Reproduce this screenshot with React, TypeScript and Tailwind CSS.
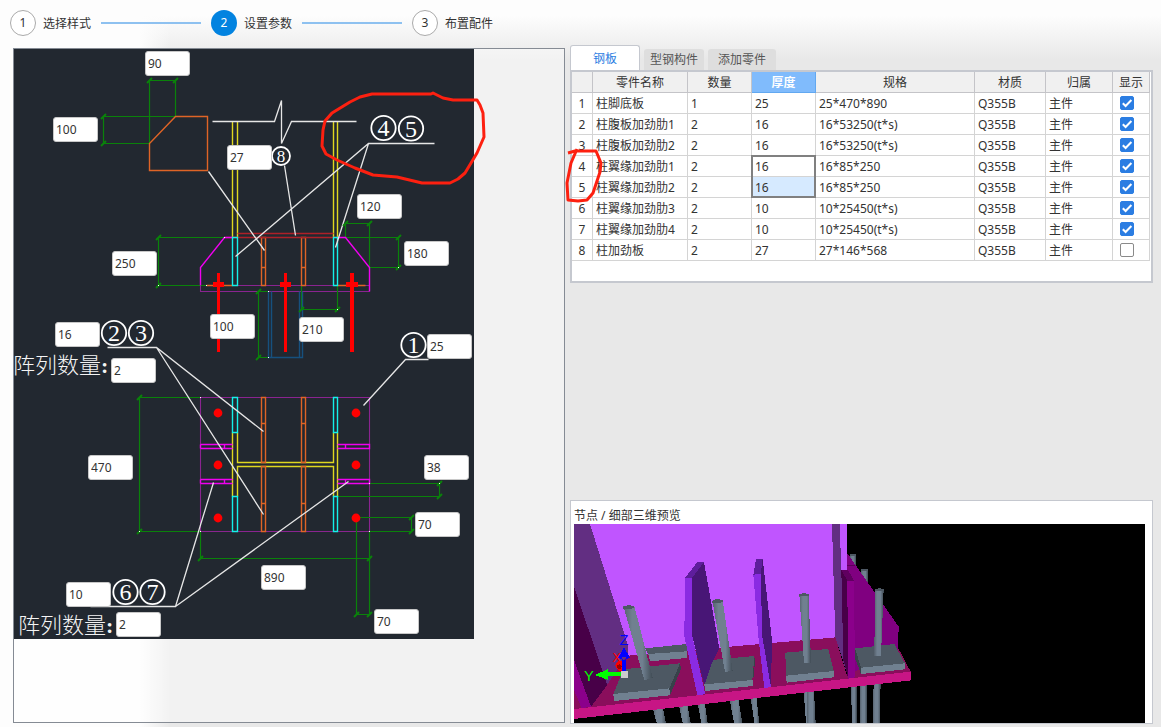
import { Fragment, useState } from "react";

const steps = ["选择样式", "设置参数", "布置配件"];
const tabs = ["钢板", "型钢构件", "添加零件"];

type Part = {
  name: string;
  count: string;
  thickness: string;
  spec: string;
  shown: boolean;
};

const initialParts: Part[] = [
  { name: "柱脚底板", count: "1", thickness: "25", spec: "25*470*890", shown: true },
  { name: "柱腹板加劲肋1", count: "2", thickness: "16", spec: "16*53250(t*s)", shown: true },
  { name: "柱腹板加劲肋2", count: "2", thickness: "16", spec: "16*53250(t*s)", shown: true },
  { name: "柱翼缘加劲肋1", count: "2", thickness: "16", spec: "16*85*250", shown: true },
  { name: "柱翼缘加劲肋2", count: "2", thickness: "16", spec: "16*85*250", shown: true },
  { name: "柱翼缘加劲肋3", count: "2", thickness: "10", spec: "10*25450(t*s)", shown: true },
  { name: "柱翼缘加劲肋4", count: "2", thickness: "10", spec: "10*25450(t*s)", shown: true },
  { name: "柱加劲板", count: "2", thickness: "27", spec: "27*146*568", shown: false },
];

const dimensions = [
  { label: "切角宽度", value: "90", place: "left-[131px] top-[2px]" },
  { label: "切角高度", value: "100", place: "left-[39px] top-[68px]" },
  { label: "加劲板厚度", value: "27", place: "left-[213px] top-[96px]" },
  { label: "顶部宽度", value: "120", place: "left-[343px] top-[145px]" },
  { label: "侧边高度", value: "180", place: "left-[390px] top-[192px]" },
  { label: "加劲肋高度", value: "250", place: "left-[98px] top-[202px]" },
  { label: "抗剪键高度", value: "100", place: "left-[196px] top-[265px]" },
  { label: "加劲肋间距", value: "210", place: "left-[285px] top-[268px]" },
  { label: "底板厚度", value: "25", place: "left-[413px] top-[285px]" },
  { label: "腹板加劲肋厚度", value: "16", place: "left-[41px] top-[273px]" },
  { label: "腹板阵列数量", value: "2", place: "left-[97px] top-[309px]" },
  { label: "底板长度", value: "470", place: "left-[74px] top-[406px]" },
  { label: "加劲肋偏移", value: "38", place: "left-[410px] top-[406px]" },
  { label: "竖向边距", value: "70", place: "left-[401px] top-[463px]" },
  { label: "底板宽度", value: "890", place: "left-[247px] top-[516px]" },
  { label: "翼缘加劲肋厚度", value: "10", place: "left-[52px] top-[533px]" },
  { label: "翼缘阵列数量", value: "2", place: "left-[102px] top-[563px]" },
  { label: "横向边距", value: "70", place: "left-[360px] top-[560px]" },
];

const balloons = [
  { n: "8", x: 281, y: 156, r: 9, size: 17 },
  { n: "4", x: 383.5, y: 128, r: 12.2, size: 24 },
  { n: "5", x: 411, y: 128.5, r: 12.2, size: 24 },
  { n: "2", x: 114, y: 333, r: 12.2, size: 24 },
  { n: "3", x: 141, y: 333, r: 12.2, size: 24 },
  { n: "1", x: 413.5, y: 345, r: 12.2, size: 24 },
  { n: "6", x: 125.5, y: 592, r: 12.2, size: 24 },
  { n: "7", x: 152.5, y: 592, r: 12.2, size: 24 },
];

const dimensionTicks = [
  [149, 80], [175, 80], [103, 116], [103, 143], [158, 237], [158, 285],
  [258, 291], [258, 357], [301, 309], [337, 309], [345, 223], [369, 223],
  [398, 237], [398, 267], [139, 397], [139, 531], [200, 558], [369, 558],
  [439, 483], [439, 496], [411, 517], [411, 531], [356, 614], [369, 614],
];

const bolts = [
  [218, 413], [218, 465], [218, 518], [356, 413], [356, 465], [356, 518],
];

function Stepper() {
  return (
    <ol className="flex h-[45px] items-center pl-[10px]">
      {steps.map((step, i) => (
        <Fragment key={step}>
          {i > 0 && <li aria-hidden="true" className="mx-[10px] h-[2px] w-[100px] bg-[#8ec1f0]" />}
          <li className="flex items-center gap-[7px]">
            <span
              className={
                i === 1
                  ? "flex size-[26px] items-center justify-center rounded-full bg-[#0283e0] text-white"
                  : "flex size-[26px] items-center justify-center rounded-full border border-[#aaaaaa] bg-white"
              }
            >
              {i + 1}
            </span>
            <span className="pt-[2px]">{step}</span>
          </li>
        </Fragment>
      ))}
    </ol>
  );
}

function SectionDrawing() {
  return (
    <svg viewBox="14 49 460 590" className="absolute inset-0 size-full overflow-visible">
      <g fill="none" strokeWidth="1.4" transform="translate(.5 .5)">
        <path
          stroke="#8a2490"
          strokeWidth="1.1"
          d="M200 285H369M200 285V291H369M200 397H369V531H200Z"
        />
        <path
          stroke="#0a820a"
          strokeWidth="1.2"
          d="M149 143V80H175V116M175 116H103V143H149M224 237H158V285H206M268 291H258V357H268M301 285V309H337V285M345 237V223H369V267M345 237H398V267H369M200 397H139V531H200M200 531V558H369M369 483H439V496H337M356 517H411V531H369M356 518V614H369V531"
        />
        <path stroke="#16507e" d="M268 291V357H302V291M271 291V357M299 291V357" />
        <path stroke="#e0d820" d="M232 121V237M237 121V237M333 121V237M337 121V237" />
        <path stroke="#e0d820" d="M232 432V496M337 432V496M237 432V462H333V432M237 496V466H333V496" />
        <path stroke="#df6426" d="M175 116H207V170H149V143ZM206 285H232M337 285H365" />
        <path
          stroke="#df6426"
          d="M261 237H265V285H261ZM301 237H305V285H301ZM261 267H265M301 267H305M261 397H265V462H261ZM301 397H305V462H301ZM261 466H265V531H261ZM301 466H305V531H301ZM261 423H265M301 423H305M261 503H265M301 503H305"
        />
        <path stroke="#ae2028" d="M237 233H333M225 237H340" />
        <path
          stroke="#f000f0"
          d="M232 237H224L200 267V285M338 237H345L369 267V291M200 444H232M200 448H232M200 444V448M224 444V448M200 479H232M200 483H232M200 479V483M224 479V483M337 444H369V448H337M345 444V448M337 479H369V483H337M345 479V483"
        />
        <path
          stroke="#14f0e8"
          d="M232 237H237V285H232ZM333 237H337V285H333ZM232 397H237V432H232ZM333 397H337V432H333ZM232 496H237V531H232ZM333 496H337V531H333Z"
        />
        <path
          stroke="#e6e6e6"
          strokeWidth="1.3"
          d="M212 121H274L281 100V143L291 121H356M208 171L264 250M284 165L295 235M434 143H368L235 256M368 143L335 247M428 359H405L363 405M107 347H156L263 431M156 347L263 514M90 606H175L213 482M175 606L348 481"
        />
      </g>
      {dimensionTicks.map(([x, y]) => (
        <path key={`${x}-${y}`} d={`M${x - 2} ${y + 3}L${x + 3} ${y - 2}`} stroke="#0a820a" strokeWidth="2" />
      ))}
      <path
        fill="#ffffff"
        d="M224 237h1v1h-1zM158 285h1v1h-1zM206 285h1v1h-1zM268 291h1v1h-1zM268 357h1v1h-1zM337 309h1v1h-1zM398 267h1v1h-1zM200 397h1v1h-1zM139 531h1v1h-1zM200 531h1v1h-1zM369 483h1v1h-1zM439 483h1v1h-1zM369 531h1v1h-1z"
      />
      <path
        fill="#ff0000"
        d="M217 273h3v79h-3zM213 282h11v5h-11zM284 273h3v79h-3zM280 282h11v5h-11zM350 273h4v79h-4zM346 282h12v5h-12z"
      />
      {bolts.map(([x, y]) => (
        <circle key={`${x}-${y}`} cx={x} cy={y} r="4.4" fill="#ff0000" />
      ))}
      {balloons.map((b) => (
        <g key={b.n}>
          <circle cx={b.x} cy={b.y} r={b.r} fill="none" stroke="#ffffff" strokeWidth="1.8" />
          <text
            x={b.x}
            y={b.y + b.size / 3}
            fontSize={b.size}
            textAnchor="middle"
            fill="#ffffff"
            className="font-['Liberation_Serif',serif]"
          >
            {b.n}
          </text>
        </g>
      ))}
      <g fill="#f4f4f4" fontSize="22" className="font-['Liberation_Serif','Noto_Sans_CJK_SC',serif] font-light">
        <text x="13" y="373">
          阵列数量<tspan className="font-bold">:</tspan>
        </text>
        <text x="18" y="633">
          阵列数量<tspan className="font-bold">:</tspan>
        </text>
      </g>
    </svg>
  );
}

function Annotation() {
  return (
    <svg viewBox="14 49 460 590" className="pointer-events-none absolute inset-0 size-full overflow-visible">
      <path
        d="M322 146L326 154L337 160L355 168L373 175L397 177L422 183H450L458 179L465 173L477 153L484 137L483 113L480 105L477 100H453L443 98L433 93L431 94H372L360 97L350 102L332 113L325 121L323 130Z"
        fill="none"
        stroke="#fd2010"
        strokeWidth="3"
        strokeLinejoin="round"
      />
    </svg>
  );
}

function DrawingPanel() {
  return (
    <section className="mt-[3px] mb-px min-w-0 flex-[550] border border-[#858b94] bg-white/45">
      <div className="relative h-[590px] w-[460px] bg-[#222830]">
        <SectionDrawing />
        {dimensions.map((d) => (
          <input
            key={d.label}
            aria-label={d.label}
            defaultValue={d.value}
            className={`absolute h-[25px] w-[45px] rounded-[3px] border border-[#c8c8c8] bg-white pl-[2px] text-[#333333] outline-none ${d.place}`}
          />
        ))}
        <Annotation />
      </div>
    </section>
  );
}

function PartsTable() {
  const [parts, setParts] = useState(initialParts);
  const toggle = (index: number) =>
    setParts(parts.map((p, i) => (i === index ? { ...p, shown: !p.shown } : p)));
  const head = "border-r border-b border-[#c4c4c8] pt-[2px] font-normal";
  const cell = "border-r border-b border-[#d4d4d4] pt-[2px] pl-[3px]";
  return (
    <table className="w-full table-fixed border-separate border-spacing-0">
      <colgroup>
        <col className="w-[21px]" />
        <col className="w-[95px]" />
        <col className="w-[64px]" />
        <col className="w-[64px]" />
        <col />
        <col className="w-[71px]" />
        <col className="w-[67px]" />
        <col className="w-[37px]" />
      </colgroup>
      <thead>
        <tr className="h-[21px] bg-[#f0f0f0]">
          <th className={head} />
          <th className={head}>零件名称</th>
          <th className={head}>数量</th>
          <th className="border-r border-b border-[#62a8f0] bg-[#80bbfc] pt-[2px] font-bold text-white">厚度</th>
          <th className={head}>规格</th>
          <th className={head}>材质</th>
          <th className={head}>归属</th>
          <th className={head}>显示</th>
        </tr>
      </thead>
      <tbody>
        {parts.map((p, i) => (
          <tr key={p.name} className="h-[21px]">
            <td className="border-r border-b border-[#d4d4d4] pt-[2px] text-center">{i + 1}</td>
            <td className={cell}>{p.name}</td>
            <td className={cell}>{p.count}</td>
            <td className={`relative ${cell} ${i === 4 ? "bg-[#d6eaff]" : ""}`}>
              {p.thickness}
              {i === 3 && (
                <span className="pointer-events-none absolute -top-px right-[-1px] -left-px z-10 h-[43px] border-2 border-[#808080]" />
              )}
            </td>
            <td className={cell}>{p.spec}</td>
            <td className={cell}>Q355B</td>
            <td className={cell}>主件</td>
            <td className="border-r border-b border-[#d4d4d4] pl-[7px]">
              <label className="relative block size-[14px]">
                <input
                  type="checkbox"
                  aria-label={`显示 ${p.name}`}
                  checked={p.shown}
                  onChange={() => toggle(i)}
                  className="block size-[14px] appearance-none rounded-[2px] border border-[#8a8a8a] bg-white checked:border-[#2b7de2] checked:bg-[#2b7de2]"
                />
                {p.shown && (
                  <svg viewBox="0 0 14 14" className="pointer-events-none absolute inset-0 size-[14px]">
                    <path d="M2.8 7.2L5.6 10L11.4 4" fill="none" stroke="#ffffff" strokeWidth="2" />
                  </svg>
                )}
              </label>
            </td>
          </tr>
        ))}
      </tbody>
    </table>
  );
}

function Rod({ d }: { d: string }) {
  return <path d={d} fill="url(#rod)" />;
}

function Preview() {
  return (
    <svg viewBox="42 102 1713 597" className="block h-auto w-full bg-black" shapeRendering="crispEdges">
      <defs>
        <linearGradient id="rod">
          <stop offset="0" stopColor="#56626e" />
          <stop offset=".3" stopColor="#708090" />
          <stop offset=".65" stopColor="#708090" />
          <stop offset="1" stopColor="#404b54" />
        </linearGradient>
      </defs>

      <Rod d="M278 655L308 652L318 699H290Z" />
      <Rod d="M357 648L382 645L392 699H368Z" />
      <Rod d="M413 640L434 638L443 699H424Z" />
      <Rod d="M509 630L535 627L547 699H522Z" />
      <Rod d="M572 623L589 620L598 699H583Z" />
      <Rod d="M731 605L745 603V699H738Z" />
      <Rod d="M741 604L762 602L767 699H745Z" />
      <Rod d="M873 590L890 588V699H876Z" />
      <Rod d="M901 586L921 584V699H900Z" />
      <Rod d="M941 581L962 579L959 699H938Z" />

      <path d="M42 655L42 590L205 497L826 442L862 560L1000 440L1015 475L1052 545L42 660Z" fill="#8a0e5c" />
      <path d="M42 102H820L828 442L205 497L180 520Z" fill="#c055ff" />
      <path d="M42 102H90L205 470V497L190 510L140 587L42 290Z" fill="#622e82" />
      <path d="M42 290L142 585L93 650L42 510Z" fill="#480048" />
      <path d="M42 510L93 650L65 655L42 600Z" fill="#8b008b" />
      <path d="M840 102H861V242H840Z" fill="#c055ff" />
      <path d="M816 102H840L843 240L864 562L845 500L826 442Z" fill="#622e82" />

      <Rod d="M870 192H888V238L870 215Z" />
      <Rod d="M903 237H924V285L903 255Z" />
      <path d="M870 192H888V198H870ZM903 237H924V243H903Z" fill="#4d5863" />
      <path d="M862 190L1016 410L1014 480L885 545L862 272Z" fill="#800080" />
      <path d="M862 226H884" stroke="#5c005c" strokeWidth="3" />
      <path d="M844 240L862 270L864 562L850 510Z" fill="#480048" />
      <path d="M844 240H864L882 272H862Z" fill="#600060" />
      <path d="M862 272H882L885 562L864 566Z" fill="#8b008b" />

      <path d="M255 475L380 462V486L265 492Z" fill="#4d5863" />
      <path d="M265 492L380 484V504L270 514Z" fill="#708090" />

      <path d="M190 538L360 520L328 595L160 612Z" fill="#4d5863" />
      <path d="M160 612L328 595L330 616L162 633Z" fill="#708090" />
      <path d="M360 520L363 537L330 616L328 595Z" fill="#38424a" />
      <Rod d="M190 348H223L278 563L253 571Z" />
      <path d="M190 350L205 345L223 348V355L190 358Z" fill="#4d5863" />

      <path d="M455 510L583 498L577 570L433 583Z" fill="#4d5863" />
      <path d="M433 583L578 570V588L435 603Z" fill="#708090" />
      <path d="M583 498L585 515L578 588V570Z" fill="#38424a" />
      <path d="M396 264L432 216L478 475L455 520L433 585L397 440Z" fill="#481676" />
      <path d="M375 264L412 216H432L396 264Z" fill="#5e1e9c" />
      <path d="M375 264H396L397 440L436 613L412 615L373 440Z" fill="#8a2be2" />
      <Rod d="M457 332L488 330L518 542L495 546Z" />
      <path d="M457 332L470 327L488 330V337L457 340Z" fill="#4d5863" />

      <path d="M602 252L608 207L636 450L633 592L607 440Z" fill="#481676" />
      <path d="M580 254L588 207H608L602 252Z" fill="#5e1e9c" />
      <path d="M580 254L602 252L607 440L633 592L613 595L596 450Z" fill="#8a2be2" />

      <path d="M676 488L805 477L821 543L678 557Z" fill="#4d5863" />
      <path d="M678 557L821 543V562L680 578Z" fill="#708090" />
      <Rod d="M718 313H746L753 518H732Z" />
      <path d="M718 313L732 309L746 313V319H718Z" fill="#4d5863" />

      <path d="M885 475L1003 462L1035 520L903 533Z" fill="#4d5863" />
      <path d="M903 533L1035 520V538L903 552Z" fill="#708090" />
      <path d="M885 475L903 533V552L885 505Z" fill="#38424a" />
      <Rod d="M945 298H971L963 497H943Z" />
      <path d="M945 298L958 294L971 298V303H945Z" fill="#4d5863" />

      <path d="M42 657L1053 545V571L42 687Z" fill="#c71585" />

      <path d="M165 527L173 514H185L190 543H178Z" fill="#ff0000" />
      <circle cx="178" cy="530" r="7" fill="#a00000" />
      <path d="M186 500H198V545H186ZM192 470L175 503L192 510L209 503Z" fill="#0000ff" />
      <path d="M140 547L186 545V557L140 559ZM104 555L143 538V569Z" fill="#00ff00" />
      <path d="M184 543H204V563H184Z" fill="#cccccc" />
      <g fontSize="44" textAnchor="middle" className="font-['Liberation_Sans',sans-serif]">
        <text x="170" y="515" fontSize="38" fill="#ff0000">X</text>
        <text x="87" y="573" fill="#00ff00">Y</text>
        <text x="192" y="466" fill="#0000ff">Z</text>
      </g>
    </svg>
  );
}

export default function App() {
  const [active, setActive] = useState(0);
  return (
    <main className="flex min-h-screen flex-col bg-[#e8e8e8] bg-[linear-gradient(to_right,#fdfdfd_140px,transparent_170px),linear-gradient(to_bottom,#fdfdfd_16px,#e8e8e8_60px)] bg-no-repeat pb-[3px] font-['Noto_Sans','Noto_Sans_CJK_SC',sans-serif] text-[12px] leading-[16px] text-[#333333]">
      <Stepper />
      <div className="flex flex-1 gap-[5px] pr-[8px] pl-[13px]">
        <DrawingPanel />
        <div className="flex min-w-0 flex-[583] flex-col justify-between gap-4">
          <section>
            <div role="tablist" className="flex h-[25px] items-end gap-[4px]">
              {tabs.map((tab, i) => (
                <button
                  key={tab}
                  type="button"
                  role="tab"
                  aria-selected={active === i}
                  onClick={() => setActive(i)}
                  className={
                    active === i
                      ? "h-[25px] rounded-t-[3px] border border-b-0 border-[#c5c8cf] bg-white px-[22px] pt-[2px] text-[#2b7de2]"
                      : "h-[21px] rounded-t-[3px] bg-[#dedede] px-[6px] pt-px text-[#555555] last:px-[10px]"
                  }
                >
                  {tab}
                </button>
              ))}
            </div>
            <div className="relative border-2 border-[#c5c8cf] bg-white pr-px pb-[20px]">
              <PartsTable />
              <svg
                viewBox="564 146 40 60"
                className="pointer-events-none absolute top-[74px] left-[-8px] z-20 h-[60px] w-[40px]"
              >
                <path
                  d="M568 153L575 151L596 151L601 163L600 172L598 178L593 193L587 200L578 201L568 200L567 183L571 163L577 149"
                  fill="none"
                  stroke="#fd2010"
                  strokeWidth="3"
                  strokeLinejoin="round"
                />
              </svg>
            </div>
          </section>
          <section className="border border-[#c5c8cf] bg-white pr-[7px] pl-[3px]">
            <h2 className="h-[23px] pt-[7px]">节点 / 细部三维预览</h2>
            <Preview />
          </section>
        </div>
      </div>
    </main>
  );
}
